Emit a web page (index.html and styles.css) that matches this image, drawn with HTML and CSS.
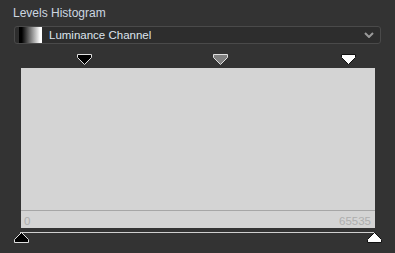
FILE: index.html
```html
<!DOCTYPE html>
<html lang="en">
<head>
    <meta charset="UTF-8">
    <title>Levels Histogram</title>
    <link rel="stylesheet" href="styles.css">
</head>
<body>
    <div class="panel">
        <div class="title">Levels Histogram</div>
        <div class="channel-select">
            <span class="swatch"></span>
            <span class="channel-name">Luminance Channel</span>
            <svg class="chevron" width="10" height="6" viewBox="0 0 10 6">
                <polyline points="1,1 5,5 9,1" fill="none" stroke="#9a9a9a" stroke-width="2"/>
            </svg>
        </div>

        <div class="levels">
            <div class="top-handles">
                <svg class="handle" style="left: 17.9%" width="15" height="11" viewBox="0 0 15 11">
                    <polygon points="0.5,0.5 14.5,0.5 14.5,3.5 7.5,10.5 0.5,3.5" fill="#000" stroke="#e0e0e0"/>
                </svg>
                <svg class="handle" style="left: 56.1%" width="15" height="11" viewBox="0 0 15 11">
                    <polygon points="0.5,0.5 14.5,0.5 14.5,3.5 7.5,10.5 0.5,3.5" fill="#808080" stroke="#e0e0e0"/>
                </svg>
                <svg class="handle" style="left: 92.5%" width="15" height="11" viewBox="0 0 15 11">
                    <polygon points="0.5,0.5 14.5,0.5 14.5,3.5 7.5,10.5 0.5,3.5" fill="#fff" stroke="#111"/>
                </svg>
            </div>

            <div class="histogram">
                <div class="plot"></div>
                <div class="range">
                    <span>0</span>
                    <span>65535</span>
                </div>
            </div>

            <div class="output-track">
                <div class="track-line"></div>
                <svg class="handle low" width="15" height="11" viewBox="0 0 15 11">
                    <polygon points="7.5,0.5 14.5,7.5 14.5,10.5 0.5,10.5 0.5,7.5" fill="#000" stroke="#e0e0e0"/>
                </svg>
                <svg class="handle high" width="15" height="11" viewBox="0 0 15 11">
                    <polygon points="7.5,0.5 14.5,7.5 14.5,10.5 0.5,10.5 0.5,7.5" fill="#fff" stroke="#111"/>
                </svg>
            </div>
        </div>
    </div>
</body>
</html>
```

FILE: styles.css
```css
body {
    margin: 0;
    background: #333333;
    font-family: 'Liberation Sans', Arial, sans-serif;
    width: 395px;
    height: 253px;
    overflow: hidden;
}

.panel {
    display: flex;
    flex-direction: column;
    padding: 6px 14px 0 13px;
}

.title {
    color: #cdd7e1;
    font-size: 12px;
    line-height: 15px;
    margin-bottom: 5px;
}

.channel-select {
    display: flex;
    align-items: center;
    height: 16px;
    margin-left: 1px;
    border: 1px solid #4a4a4a;
    border-radius: 3px;
    background: #2d2d2d;
    padding: 0 3px 0 4px;
}

.swatch {
    width: 23px;
    height: 16px;
    background: linear-gradient(to right, #000 12%, #fff 92%);
}

.channel-name {
    flex: 1;
    color: #dde4ec;
    font-size: 11.5px;
    margin-left: 7px;
}

.chevron {
    margin-right: 3px;
}

.levels {
    margin: 0 6px 0 8px;
}

.top-handles {
    position: relative;
    height: 11px;
    margin-top: 10px;
    margin-bottom: 3px;
}

.handle {
    position: absolute;
    top: 0;
    margin-left: -7px;
    display: block;
}

.histogram {
    background: #d4d4d4;
    display: flex;
    flex-direction: column;
}

.plot {
    height: 142px;
    border-bottom: 1px solid #a6a6a6;
}

.range {
    display: flex;
    justify-content: space-between;
    height: 17px;
    padding: 0 4px 0 3px;
    color: #aeaeae;
    font-size: 11.5px;
    line-height: 20px;
}

.output-track {
    position: relative;
    height: 16px;
    margin-top: 4px;
}

.track-line {
    height: 1px;
    background: #cfcfcf;
    margin-left: -1px;
    margin-right: 1px;
}

.handle.low {
    left: 0;
}

.handle.high {
    left: 100%;
    margin-left: -8px;
}
```
